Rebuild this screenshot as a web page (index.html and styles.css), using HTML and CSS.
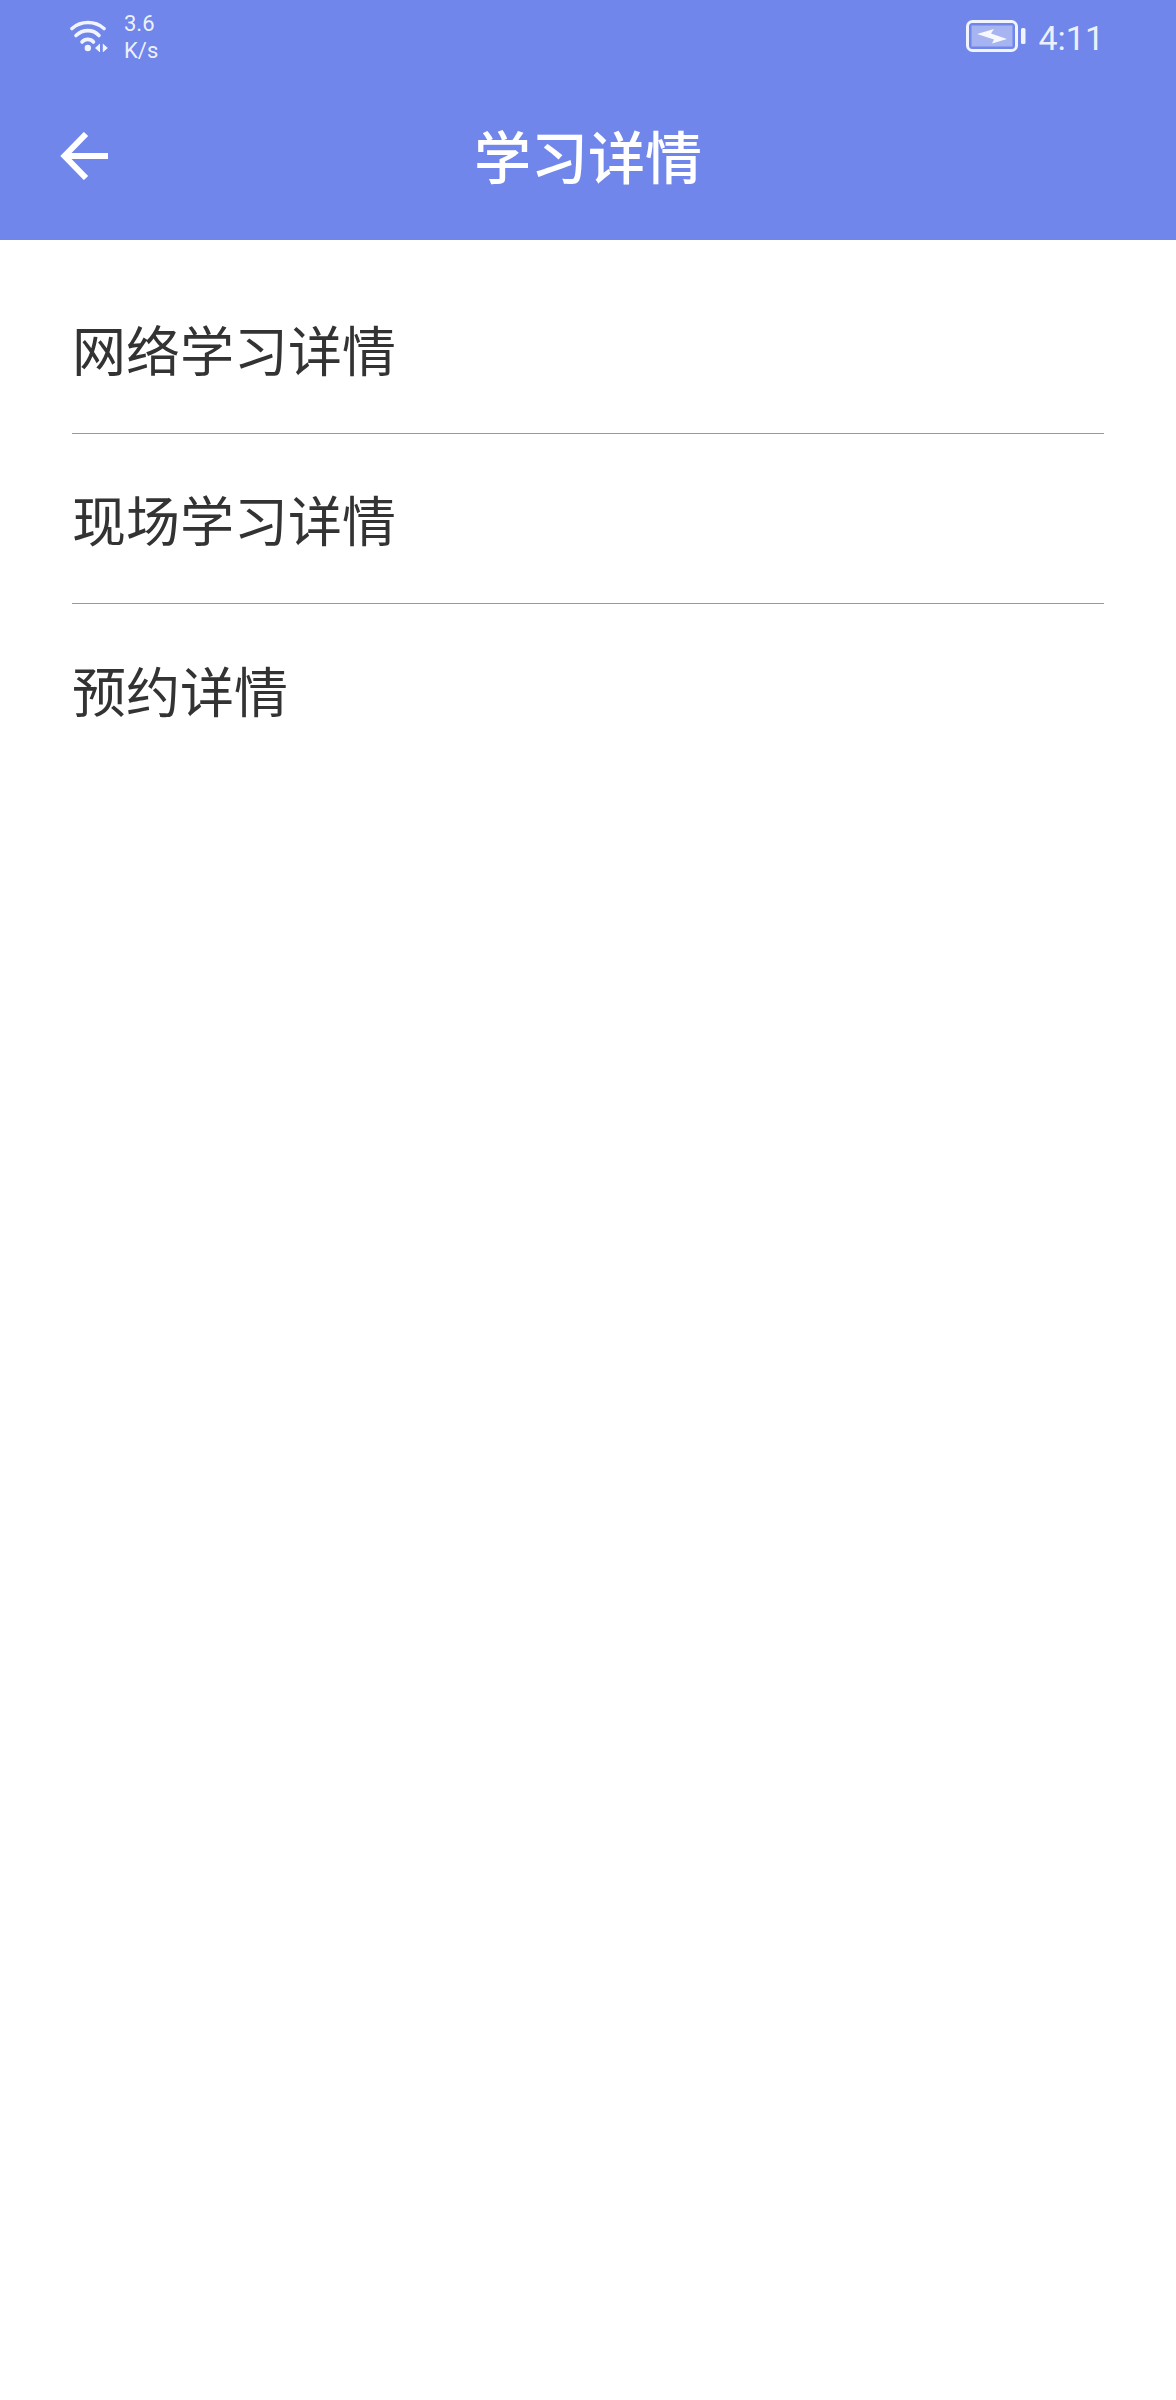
FILE: index.html
```html
<!DOCTYPE html>
<html lang="zh-CN">
<head>
<meta charset="utf-8">
<title>学习详情</title>
<link rel="stylesheet" href="styles.css">
</head>
<body>
<header class="header">
  <div class="status">
    <div class="status-left">
      <svg class="wifi" width="38" height="32" viewBox="0 0 38 32" aria-hidden="true">
        <path d="M2 8.500C11 0.500 25 0.500 34 8.500" fill="none" stroke="currentColor" stroke-width="3.600" stroke-linecap="round"/>
        <path d="M6 15.500C13 9 23 9 29 15.500" fill="none" stroke="currentColor" stroke-width="3.600" stroke-linecap="round"/>
        <path d="M12 22C15 18.500 20.500 18.500 23.500 22" fill="none" stroke="currentColor" stroke-width="3.600" stroke-linecap="round"/>
        <circle cx="17.800" cy="28" r="3.200" fill="currentColor"/>
        <path d="M25 28l5-4.500v9zM32.800 23.500v9l5-4.500z" fill="currentColor"/>
      </svg>
      <div class="speed"><span>3.6</span><span>K/s</span></div>
    </div>
    <div class="status-right">
      <svg class="battery" width="60" height="32" viewBox="0 0 60 32" aria-hidden="true">
        <rect x="1.500" y="1.500" width="49" height="29" rx="5" fill="none" stroke="currentColor" stroke-width="3"/>
        <rect x="5.500" y="5.500" width="41" height="21" fill="currentColor" opacity=".42"/>
        <path d="M11 14L28 9L25 13.500L41 19L26 23.500L28 19.500z" fill="currentColor"/>
        <rect x="55" y="8" width="4.500" height="16" rx="1.500" fill="currentColor"/>
      </svg>
      <span class="time">4:11</span>
    </div>
  </div>
  <div class="toolbar">
    <svg class="back" width="50" height="48" viewBox="0 0 50 48" aria-hidden="true">
      <path d="M26 2L4.500 24L26 46M4.500 24H48" fill="none" stroke="currentColor" stroke-width="6"/>
    </svg>
    <h1 class="title">学习详情</h1>
  </div>
</header>
<main class="list">
  <div class="row">网络学习详情</div>
  <div class="row">现场学习详情</div>
  <div class="row">预约详情</div>
</main>
</body>
</html>
```
FILE: styles.css
```css
* {
  box-sizing: border-box;
}

html,
body {
  margin: 0;
  padding: 0;
  background: #fff;
}

body {
  min-height: 2400px;
  font-family: "Noto Sans CJK SC", "Noto Sans", sans-serif;
}

.header {
  height: 240px;
  background: #7086ea;
  color: #fff;
}

.status {
  height: 72px;
  padding: 0 72px 0 70px;
  display: flex;
  align-items: flex-start;
  justify-content: space-between;
  color: rgba(255, 255, 255, 0.9);
}

.status-left {
  display: flex;
  gap: 16px;
}

.wifi {
  margin-top: 20px;
}

.speed {
  margin-top: 10px;
  display: flex;
  flex-direction: column;
  font-family: Roboto, sans-serif;
  font-size: 22px;
  line-height: 27px;
}

.status-right {
  display: flex;
  align-items: center;
  gap: 12px;
  height: 72px;
}

.battery {
  margin-top: 0;
}

.time {
  font-family: Roboto, sans-serif;
  font-weight: 400;
  font-size: 34px;
  line-height: 72px;
  margin-top: 3px;
}

.toolbar {
  position: relative;
  height: 168px;
  display: flex;
  align-items: center;
  justify-content: center;
}

.back {
  position: absolute;
  left: 60px;
  top: 60px;
}

.title {
  margin: 0;
  font-size: 57px;
  font-weight: 500;
  line-height: 72px;
  margin-top: -4px;
}

.list {
  padding: 24px 72px 0;
}

.row {
  height: 170px;
  display: flex;
  align-items: center;
  font-size: 54px;
  color: #333;
  border-bottom: 1px solid #999;
}

.row:last-child {
  border-bottom: 0;
}
```
